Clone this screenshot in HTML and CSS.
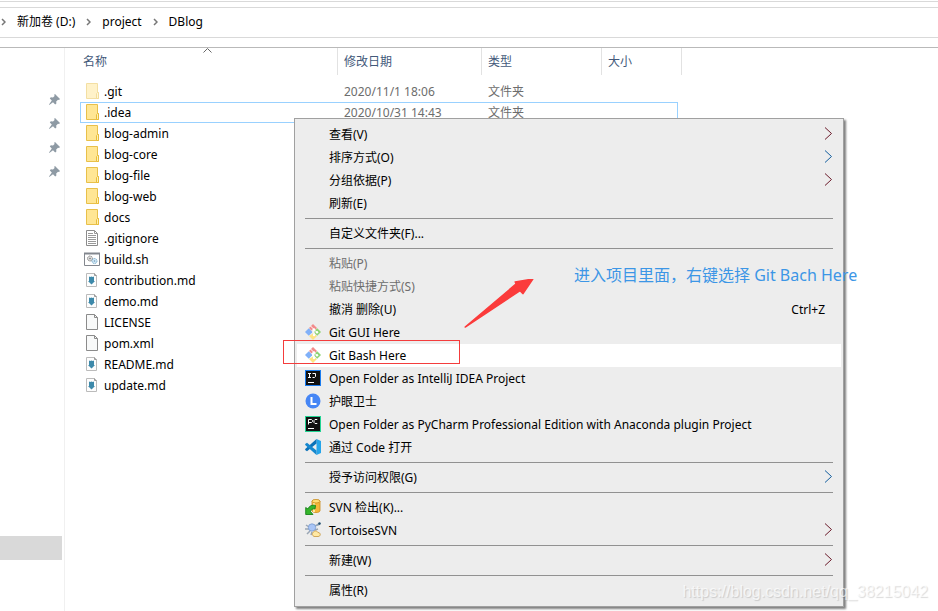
FILE: index.html
```html
<!DOCTYPE html>
<html lang="zh-CN">

<head>
	<meta charset="UTF-8">
	<meta name="viewport" content="width=device-width, initial-scale=1.0">
	<title>DBlog</title>
	<link rel="stylesheet" href="styles.css">
</head>

<body>
	<!-- Shared icons -->
	<svg class="sprite" aria-hidden="true">
		<symbol id="crumb" viewBox="0 0 5 8">
			<path d="M1 1l3 3-3 3" fill="none" stroke="#777" stroke-width="1.5" />
		</symbol>
		<symbol id="pin" viewBox="0 0 11 11">
			<path d="M6 0l5 5-1 1-1-.3-1.800 1.800.2 2-1.200 1-2.200-2.200L.6 10.800 0 11l.2-.8L2.800 6.600.8 4.500l1-1.200 2.200.1L5.600 1.900 5.200.8z" fill="#8e9aa4" />
		</symbol>
		<symbol id="folder" viewBox="0 0 16 16">
			<path d="M2.500.5h11v9h1v6h-12z" fill="#ffe694" stroke="#e8c04a" />
			<path d="M12.500 15.500v-5l1-1h1v6z" fill="#fff0b5" stroke="#e8bd3a" />
		</symbol>
		<symbol id="blank" viewBox="0 0 16 16">
			<path d="M2.500.5h8l3 3v12h-11z" fill="#f8f9f9" stroke="#8b8b8b" />
			<path d="M10.500.5v3h3" fill="none" stroke="#8b8b8b" />
		</symbol>
		<symbol id="text" viewBox="0 0 16 16">
			<path d="M2.500.5h8l3 3v12h-11z" fill="#fff" stroke="#8b8b8b" />
			<path d="M10.500.5v3h3M4 3.500h5M4 5.500h8M4 7.500h8M4 9.500h8M4 11.500h8M4 13.500h8" fill="none" stroke="#999" />
		</symbol>
		<symbol id="script" viewBox="0 0 16 16">
			<path d="M.5 2.500h15v12H.5z" fill="#fff" stroke="#83878e" />
			<path d="M0 2.500h16" stroke="#83878e" stroke-width="2" />
			<circle cx="6" cy="7.500" r="2.500" fill="#ddd" stroke="#888" stroke-dasharray="1.500 .6" />
			<circle cx="6" cy="7.500" r=".8" fill="#777" />
			<circle cx="10.500" cy="10" r="2.500" fill="#d4e9f5" stroke="#77a9c9" stroke-dasharray="1.500 .6" />
			<circle cx="10.500" cy="10" r=".8" fill="#6b9cbc" />
		</symbol>
		<symbol id="markdown" viewBox="0 0 16 16">
			<path d="M2.500 1.500h8l2 2v11h-10z" fill="#fdfdfd" stroke="#bbb" />
			<path d="M10.500 1.500v2h2" fill="none" stroke="#999" />
			<path d="M5 4.500l1.200.5 1.300-.5L8.800 5l1.200-.5V9h1l-3.500 3.500L4 9h1z" fill="#3d89aa" />
		</symbol>
		<symbol id="git" viewBox="0 0 16 16">
			<path d="M8 0l4 4-2.500 2.500L8 5 6.500 6.500 4 4z" fill="#f28b8b" />
			<path d="M3.800 4.200L7 7.400v1.200l-3.200 3.200L0 8z" fill="#80b0f8" />
			<path d="M12.200 4.200L16 8l-3.800 3.800L9 8.600V7.400z" fill="#8ed373" />
			<path d="M8 9.600l4 2.400-4 4-4-4z" fill="#fde383" />
			<path d="M5.500 2l3.500 3.500v5.500M9 5.500L12 8.500" fill="none" stroke="#fff" />
			<circle cx="9" cy="5.500" r="1.200" fill="#fff" />
			<circle cx="12" cy="8.300" r="1.200" fill="#fff" />
			<circle cx="9" cy="11" r="1.200" fill="#fff" />
		</symbol>
		<symbol id="next" viewBox="0 0 9 13">
			<path d="M1 .5l6.500 6L1 12.500" fill="none" stroke="currentColor" />
		</symbol>
	</svg>

	<header class="toolbar">
		<nav class="breadcrumb">
			<svg class="crumb"><use href="#crumb" /></svg>
			<a href="#">新加卷 (D:)</a>
			<svg class="crumb"><use href="#crumb" /></svg>
			<a href="#">project</a>
			<svg class="crumb"><use href="#crumb" /></svg>
			<a href="#">DBlog</a>
		</nav>
	</header>

	<main class="explorer">
		<aside class="sidebar">
			<ul class="pins">
				<li><svg class="pin"><use href="#pin" /></svg></li>
				<li><svg class="pin"><use href="#pin" /></svg></li>
				<li><svg class="pin"><use href="#pin" /></svg></li>
				<li><svg class="pin"><use href="#pin" /></svg></li>
			</ul>
			<div class="current"></div>
		</aside>

		<section class="content">
			<svg class="sort" viewBox="0 0 9 5"><path d="M.5 4.500l4-4 4 4" fill="none" stroke="#666" /></svg>
			<table class="files">
				<colgroup>
					<col class="col-name">
					<col class="col-date">
					<col class="col-type">
					<col class="col-size">
					<col class="col-end">
				</colgroup>
				<thead>
					<tr>
						<th>名称</th>
						<th>修改日期</th>
						<th>类型</th>
						<th colspan="2">大小</th>
					</tr>
				</thead>
				<tbody>
					<tr class="hidden-folder">
						<td><span class="file"><svg class="icon"><use href="#folder" /></svg>.git</span></td>
						<td>2020/11/1 18:06</td>
						<td>文件夹</td>
						<td></td>
					</tr>
					<tr class="focused">
						<td><span class="file"><svg class="icon"><use href="#folder" /></svg>.idea</span></td>
						<td>2020/10/31 14:43</td>
						<td>文件夹</td>
						<td></td>
					</tr>
					<tr><td><span class="file"><svg class="icon"><use href="#folder" /></svg>blog-admin</span></td></tr>
					<tr><td><span class="file"><svg class="icon"><use href="#folder" /></svg>blog-core</span></td></tr>
					<tr><td><span class="file"><svg class="icon"><use href="#folder" /></svg>blog-file</span></td></tr>
					<tr><td><span class="file"><svg class="icon"><use href="#folder" /></svg>blog-web</span></td></tr>
					<tr><td><span class="file"><svg class="icon"><use href="#folder" /></svg>docs</span></td></tr>
					<tr><td><span class="file"><svg class="icon"><use href="#text" /></svg>.gitignore</span></td></tr>
					<tr><td><span class="file"><svg class="icon"><use href="#script" /></svg>build.sh</span></td></tr>
					<tr><td><span class="file"><svg class="icon"><use href="#markdown" /></svg>contribution.md</span></td></tr>
					<tr><td><span class="file"><svg class="icon"><use href="#markdown" /></svg>demo.md</span></td></tr>
					<tr><td><span class="file"><svg class="icon"><use href="#blank" /></svg>LICENSE</span></td></tr>
					<tr><td><span class="file"><svg class="icon"><use href="#blank" /></svg>pom.xml</span></td></tr>
					<tr><td><span class="file"><svg class="icon"><use href="#markdown" /></svg>README.md</span></td></tr>
					<tr><td><span class="file"><svg class="icon"><use href="#markdown" /></svg>update.md</span></td></tr>
				</tbody>
			</table>
		</section>
	</main>

	<div class="menu">
		<button class="item"><span class="label">查看(V)</span><svg class="next red"><use href="#next" /></svg></button>
		<button class="item"><span class="label">排序方式(O)</span><svg class="next blue"><use href="#next" /></svg></button>
		<button class="item"><span class="label">分组依据(P)</span><svg class="next red"><use href="#next" /></svg></button>
		<button class="item"><span class="label">刷新(E)</span></button>
		<hr>
		<button class="item"><span class="label">自定义文件夹(F)...</span></button>
		<hr>
		<button class="item" disabled><span class="label">粘贴(P)</span></button>
		<button class="item" disabled><span class="label">粘贴快捷方式(S)</span></button>
		<button class="item"><span class="label">撤消 删除(U)</span><span class="shortcut">Ctrl+Z</span></button>
		<button class="item"><svg class="icon"><use href="#git" /></svg><span class="label">Git GUI Here</span></button>
		<button class="item active"><svg class="icon"><use href="#git" /></svg><span class="label">Git Bash Here</span></button>
		<button class="item">
			<svg class="icon" viewBox="0 0 16 16">
				<path d="M0 0h16v16H0z" fill="#1a7cf0" />
				<path d="M1 1h14v14H1z" fill="#111" />
				<path d="M3 3.500h3M4.500 3v5M3 7.500h3M7.500 3.500h3v3l-1 1h-2M3 12.500h6" fill="none" stroke="#fff" />
			</svg>
			<span class="label">Open Folder as IntelliJ IDEA Project</span>
		</button>
		<button class="item">
			<svg class="icon" viewBox="0 0 16 16">
				<circle cx="8" cy="8" r="7.500" fill="#4686f5" />
				<path d="M6.500 4v7h5" fill="none" stroke="#fff" stroke-width="2" />
			</svg>
			<span class="label">护眼卫士</span>
		</button>
		<button class="item">
			<svg class="icon" viewBox="0 0 16 16">
				<path d="M0 0h16v16H0z" fill="#22d393" />
				<path d="M1 1h14v14H1z" fill="#111" />
				<path d="M3.500 8.500v-5h3l1 1v1l-1 1h-3M12.500 4l-.5-.5h-2l-1 1v2l1 1h2l.5-.5M3 12.500h6" fill="none" stroke="#fff" />
			</svg>
			<span class="label">Open Folder as PyCharm Professional Edition with Anaconda plugin Project</span>
		</button>
		<button class="item">
			<svg class="icon" viewBox="0 0 16 16">
				<path d="M11.500 0L16 2v12l-4.500 2z" fill="#25a5ea" />
				<path d="M11.500 0v4.500L2 12.300.2 11v-1z" fill="#0b72b9" />
				<path d="M11.500 16v-4.500L2 3.700.2 5v1z" fill="#1688cf" />
			</svg>
			<span class="label">通过 Code 打开</span>
		</button>
		<hr>
		<button class="item"><span class="label">授予访问权限(G)</span><svg class="next blue"><use href="#next" /></svg></button>
		<hr>
		<button class="item">
			<svg class="icon" viewBox="0 0 16 16">
				<path d="M7 2v10c1 2 7 2 8 0V2z" fill="#f4b73a" stroke="#c98a1a" stroke-width=".8" />
				<path d="M9 4v9" stroke="#ffe9a0" stroke-width="2" />
				<ellipse cx="11" cy="2.200" rx="4" ry="1.800" fill="#ffdf73" stroke="#c98a1a" stroke-width=".8" />
				<path d="M10.500 6.500C7 5.500 4 7 3 10L.7 8.500v7H8L5.500 12.500c.5-2 2-3 4.500-2.500z" fill="#35b52b" stroke="#087a0c" stroke-width=".8" />
			</svg>
			<span class="label">SVN 检出(K)...</span>
		</button>
		<button class="item">
			<svg class="icon" viewBox="0 0 16 16">
				<path d="M1 3l3 2M0 7l4 0M2 12l3-3M10 4l4-2M7 10l-1 3M10 8l3-1" stroke="#9aa6b4" stroke-width="1.500" />
				<circle cx="7" cy="5.500" r="3.700" fill="#a9c5f6" stroke="#7799cd" stroke-width=".8" />
				<path d="M11 4l2-2.500 2.500-.5-.5 2z" fill="#8aa2b8" />
				<circle cx="14.500" cy="1.500" r="1.200" fill="#234f70" />
				<path d="M8 10.500c1-2 4-2 5 0 3 0 3 4 0 4H9c-2-1-2-3-1-4z" fill="#ffe9a4" stroke="#c7973f" stroke-width=".8" />
			</svg>
			<span class="label">TortoiseSVN</span><svg class="next red"><use href="#next" /></svg>
		</button>
		<hr>
		<button class="item"><span class="label">新建(W)</span><svg class="next red"><use href="#next" /></svg></button>
		<hr>
		<button class="item"><span class="label">属性(R)</span></button>
	</div>

	<!-- Annotations -->
	<div class="mark"></div>
	<svg class="arrow" viewBox="0 0 72 50"><path d="M1 49L53 5l-1-2L70 0 60 15l-3-3z" fill="#fb3b3b" stroke="#fb3b3b" stroke-width="1.500" stroke-linejoin="round" /></svg>
	<p class="note">进入项目里面，右键选择 Git Bach Here</p>
	<p class="watermark">https://blog.csdn.net/qq_38215042</p>
</body>

</html>
```
FILE: styles.css
```css
* {
	box-sizing: border-box;
}

body {
	position: relative;
	display: flex;
	flex-direction: column;
	min-height: 100vh;
	margin: 0;
	color: #000;
	background-color: #fff;
	font-family: "Noto Sans", "Noto Sans CJK SC", sans-serif;
	font-size: 12px;
	line-height: 20px;
	overflow: hidden;
}

.sprite {
	display: none;
}

.icon {
	flex: none;
	width: 16px;
	height: 16px;
	margin-bottom: 1px;
}

/* Address bar */
.toolbar {
	padding: 5px 0 9px;
	margin-top: 1px;
	border-top: 1px solid #d9d9d9;
	border-bottom: 1px solid #b9b9b9;
}

.breadcrumb {
	display: flex;
	align-items: center;
	gap: 11px;
	height: 31px;
	padding: 0 1px 2px;
	border-top: 1px solid #d9d9d9;
	border-bottom: 1px solid #d9d9d9;
}

.breadcrumb a {
	color: #000;
	text-decoration: none;
}

.crumb {
	width: 5px;
	height: 8px;
}

/* Explorer */
.explorer {
	display: flex;
	flex: 1;
}

.sidebar {
	width: 65px;
	padding-top: 40px;
	border-right: 1px solid #f0f0f0;
}

.pins {
	margin: 0;
	padding: 0 4px 0 0;
	list-style: none;
}

.pins li {
	display: flex;
	align-items: center;
	justify-content: flex-end;
	height: 24px;
}

.pin {
	width: 11px;
	height: 11px;
	margin-bottom: 1px;
}

.current {
	height: 24px;
	margin: 352px 2px 0 0;
	background-color: #d9d9d9;
}

.content {
	position: relative;
	flex: 1;
	padding-left: 15px;
}

.sort {
	position: absolute;
	top: 0;
	left: 138px;
	width: 9px;
	height: 5px;
}

.files {
	table-layout: fixed;
	width: 602px;
	border-collapse: separate;
	border-spacing: 0;
}

.col-name {
	width: 258px;
}

.col-date {
	width: 144px;
}

.col-type {
	width: 120px;
}

.col-size {
	width: 76px;
}

.col-end {
	width: 4px;
}

.files th {
	height: 27px;
	padding: 0 6px;
	border-right: 1px solid #e2e2e2;
	color: #43597a;
	font-weight: normal;
	text-align: left;
}

.files th:first-child {
	padding-left: 3px;
}

.files tbody::before {
	content: "";
	display: block;
	height: 6px;
}

.files td {
	height: 21px;
	padding: 0 6px;
	border: 0 solid #99d1ff;
	line-height: 19px;
	color: #6d6d6d;
}

.files td:first-child {
	padding: 0 4px;
	color: #000;
}

.files .focused td {
	border-width: 1px 0;
}

.files .focused td:first-child {
	padding-left: 3px;
	border-left-width: 1px;
}

.files .focused td:last-child {
	border-right-width: 1px;
}

.file {
	display: flex;
	align-items: center;
	gap: 4px;
}

.hidden-folder .icon {
	opacity: .5;
}

/* Context menu */
.menu {
	position: absolute;
	top: 118px;
	left: 294px;
	display: flex;
	flex-direction: column;
	width: 550px;
	padding: 4px 2px;
	border: 1px solid #a0a0a0;
	background-color: #ededed;
	box-shadow: 2px 2px 2px #808080;
}

.item {
	display: flex;
	align-items: center;
	gap: 8px;
	height: 23px;
	padding: 0 8px;
	border: none;
	color: #000;
	background: none;
	font: inherit;
	text-align: left;
}

.item:disabled {
	color: #6d6d6d;
}

.item.active {
	background-color: #fff;
}

.label {
	flex: 1;
}

.label:first-child {
	padding-left: 24px;
}

.shortcut {
	padding-right: 8px;
}

.next {
	width: 9px;
	height: 13px;
	margin-bottom: 2px;
}

.red {
	color: #6b1a2b;
}

.blue {
	color: #155f9f;
}

.menu hr {
	width: 528px;
	margin: 3px 8px;
	border: none;
	border-top: 1px solid #919191;
}

/* Annotations */
.mark {
	position: absolute;
	top: 340px;
	left: 283px;
	width: 177px;
	height: 24px;
	border: 1px solid #f43c3c;
}

.arrow {
	position: absolute;
	top: 279px;
	left: 464px;
	width: 71px;
	height: 49px;
}

.note {
	position: absolute;
	top: 265px;
	left: 574px;
	margin: 0;
	color: #3c96e6;
	font-size: 16px;
	white-space: nowrap;
}

.watermark {
	position: absolute;
	right: 10px;
	bottom: 9px;
	margin: 0;
	color: rgba(255, 255, 255, .7);
	font-family: "Liberation Sans", Arial, sans-serif;
	font-size: 16px;
	text-shadow: 1px 1px 1px rgba(0, 0, 0, .15);
}
```
